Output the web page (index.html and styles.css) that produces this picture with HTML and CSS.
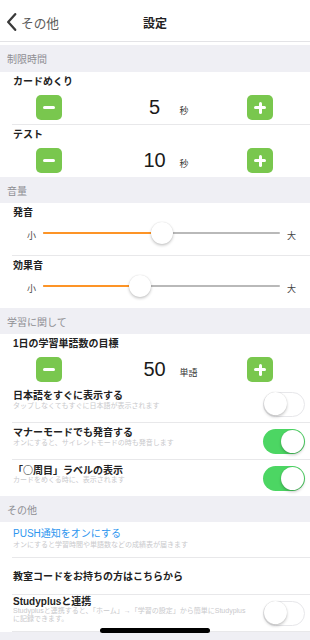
FILE: index.html
```html
<!DOCTYPE html>
<html lang="ja">
<head>
<meta charset="utf-8">
<title>設定</title>
<link rel="stylesheet" href="styles.css">
</head>
<body>
<div class="screen">
  <header class="nav">
    <div class="back">
      <svg class="chev" width="11" height="18" viewBox="0 0 11 18"><path d="M9.2 1.2 L2.2 9 L9.2 16.8" fill="none" stroke="#3a3a3a" stroke-width="2.3" stroke-linecap="round" stroke-linejoin="round"/></svg>
      <span>その他</span>
    </div>
    <div class="title">設定</div>
    <div></div>
  </header>
  <div class="gap"></div>

  <div class="section-header first">制限時間</div>
  <div class="item stepper-item">
    <div class="item-title">カードめくり</div>
    <div class="stepper">
      <div class="step minus"></div>
      <div class="value">5</div>
      <div class="unit">秒</div>
      <div class="step plus"></div>
    </div>
  </div>
  <div class="sep"></div>
  <div class="item stepper-item">
    <div class="item-title">テスト</div>
    <div class="stepper">
      <div class="step minus"></div>
      <div class="value">10</div>
      <div class="unit">秒</div>
      <div class="step plus"></div>
    </div>
  </div>

  <div class="section-header">音量</div>
  <div class="item slider-item">
    <div class="item-title">発音</div>
    <div class="slider">
      <span class="lbl">小</span>
      <div class="track"><div class="fill" style="width:50.2%"></div><div class="thumb" style="left:50.2%"></div></div>
      <span class="lbl">大</span>
    </div>
  </div>
  <div class="sep"></div>
  <div class="item slider-item">
    <div class="item-title">効果音</div>
    <div class="slider">
      <span class="lbl">小</span>
      <div class="track"><div class="fill" style="width:41%"></div><div class="thumb" style="left:41%"></div></div>
      <span class="lbl">大</span>
    </div>
  </div>

  <div class="section-header">学習に関して</div>
  <div class="item stepper-item">
    <div class="item-title">1日の学習単語数の目標</div>
    <div class="stepper">
      <div class="step minus"></div>
      <div class="value">50</div>
      <div class="unit">単語</div>
      <div class="step plus"></div>
    </div>
  </div>
  <div class="item toggle-row">
    <div class="texts">
      <div class="row-title">日本語をすぐに表示する</div>
      <div class="row-sub">タップしなくてもすぐに日本語が表示されます</div>
    </div>
    <div class="toggle off"><div class="knob"></div></div>
  </div>
  <div class="sep"></div>
  <div class="item toggle-row">
    <div class="texts">
      <div class="row-title">マナーモードでも発音する</div>
      <div class="row-sub">オンにすると、サイレントモードの時も発音します</div>
    </div>
    <div class="toggle on"><div class="knob"></div></div>
  </div>
  <div class="sep"></div>
  <div class="item toggle-row">
    <div class="texts">
      <div class="row-title cjk">「○周目」ラベルの表示</div>
      <div class="row-sub">カードをめくる時に、表示されます</div>
    </div>
    <div class="toggle on"><div class="knob"></div></div>
  </div>

  <div class="section-header">その他</div>
  <div class="item push-row">
    <div class="row-title link">PUSH通知をオンにする</div>
    <div class="row-sub">オンにすると学習時間や単語数などの成績表が届きます</div>
  </div>
  <div class="sep"></div>
  <div class="item plain-row">
    <div class="row-title">教室コードをお持ちの方はこちらから</div>
  </div>
  <div class="sep"></div>
  <div class="item toggle-row study-row">
    <div class="texts">
      <div class="row-title">Studyplusと連携</div>
      <div class="row-sub two">Studyplusと連携すると、「ホーム」→「学習の設定」から簡単にStudyplus<br>に記録できます。</div>
    </div>
    <div class="toggle off"><div class="knob"></div></div>
  </div>
  <div class="sep"></div>
  <div class="bottom"></div>
  <div class="home-indicator"></div>
</div>
</body>
</html>
```

FILE: styles.css
```css
* { box-sizing: border-box; }
html, body { margin: 0; padding: 0; background: #ffffff; }
body {
  font-family: "Liberation Sans", "Noto Sans CJK JP", sans-serif;
  color: #1e1e1e;
}
.screen {
  width: 310px;
  height: 640px;
  position: relative;
  overflow: hidden;
  background: #ffffff;
}

/* nav */
.nav {
  height: 42px;
  padding-top: 3px;
  border-bottom: 1px solid #e3e3e6;
  display: grid;
  grid-template-columns: 1fr auto 1fr;
  align-items: center;
}
.back {
  display: flex;
  align-items: center;
  padding-left: 6px;
  color: #5a5a5a;
  font-size: 12.7px;
}
.back span { margin-left: 4px; font-family: "Noto Sans CJK JP", sans-serif; }
.chev { display: block; }
.title {
  font-family: "Noto Sans CJK JP", sans-serif;
  font-size: 12px;
  font-weight: 700;
  color: #222;
}
.gap { height: 3px; }

/* section headers */
.section-header {
  height: 26px;
  background: #efeff4;
  padding-left: 7px;
  display: flex;
  align-items: center;
  font-family: "Noto Sans CJK JP", sans-serif;
  font-size: 10px;
  color: #8e8e93;
}
.section-header.first { height: 27px; }

.sep {
  height: 1px;
  margin-left: 12px;
  background: #e8e8ea;
}

.item-title {
  padding-left: 13px;
  font-size: 10px;
  line-height: 11px;
  font-weight: 700;
  color: #222;
}

/* stepper */
.stepper-item {
  height: 52px;
  padding-top: 4px;
}
.stepper {
  margin-top: 8px;
  height: 25px;
  display: grid;
  grid-template-columns: 26px 1fr 50px 1fr 26px;
  align-items: center;
  padding: 0 37px 0 36px;
}
.step {
  width: 26px;
  height: 25px;
  border-radius: 5px;
  background: #79c74e;
  position: relative;
}
.step::before, .plus::after {
  content: "";
  position: absolute;
  left: 7px;
  top: 11px;
  width: 12px;
  height: 3px;
  border-radius: 1.5px;
  background: #ffffff;
}
.plus::after {
  left: 11.5px;
  top: 6.5px;
  width: 3px;
  height: 12px;
}
.minus { grid-column: 1; }
.plus { grid-column: 5; }
.value {
  grid-column: 3;
  justify-self: center;
  font-size: 20px;
  line-height: 25px;
  color: #1a1a1a;
}
.unit {
  grid-column: 4;
  justify-self: start;
  font-family: "Noto Sans CJK JP", sans-serif;
  font-size: 9px;
  padding-top: 5px;
  color: #333;
}

/* slider */
.slider-item {
  height: 52px;
  padding-top: 4px;
}
.slider {
  margin-top: 4px;
  height: 22px;
  display: grid;
  grid-template-columns: auto 1fr auto;
  column-gap: 7px;
  align-items: center;
  padding: 0 14px 0 27px;
}
.lbl {
  font-family: "Noto Sans CJK JP", sans-serif;
  font-size: 9px;
  color: #444;
  padding-top: 4px;
}
.track {
  position: relative;
  height: 2px;
  background: #b9b9b9;
  border-radius: 1px;
}
.fill {
  position: absolute;
  left: 0;
  top: 0;
  height: 2px;
  background: #fd9426;
  border-radius: 1px;
}
.thumb {
  position: absolute;
  top: -10px;
  width: 22px;
  height: 22px;
  margin-left: -11px;
  border-radius: 50%;
  background: #ffffff;
  box-shadow: 0 1.5px 3px rgba(0,0,0,0.22), 0 0 1px rgba(0,0,0,0.15);
}

/* toggle rows */
.toggle-row {
  height: 36px;
  display: flex;
  justify-content: space-between;
  align-items: center;
  padding: 0 5px 0 13px;
}
.texts {
  align-self: flex-start;
  padding-top: 4px;
}
.row-title {
  font-size: 10px;
  line-height: 11px;
  font-weight: 700;
  color: #222;
}
.row-title.cjk { font-family: "Noto Sans CJK JP", sans-serif; }
.row-sub {
  font-size: 7px;
  line-height: 10px;
  color: #c9c9cc;
  white-space: nowrap;
}
.row-sub.two { line-height: 8.5px; }
.link { color: #2d96ef; font-weight: 400; }

.toggle {
  width: 42px;
  height: 25px;
  border-radius: 13px;
  position: relative;
  flex: none;
}
.toggle.off {
  background: #ffffff;
  border: 1.5px solid #e7e7ea;
}
.toggle.on { background: #4cd663; }
.knob {
  position: absolute;
  width: 23px;
  height: 23px;
  top: 1px;
  border-radius: 50%;
  background: #ffffff;
  box-shadow: 0 2px 3px rgba(0,0,0,0.2), 0 0 1px rgba(0,0,0,0.2);
}
.toggle.off .knob { top: -0.5px; left: -0.5px; }
.toggle.on .knob { right: 1px; }

.push-row {
  height: 35px;
  padding: 5.5px 0 0 13px;
}
.push-row .row-sub { margin-top: 1px; }
.plain-row {
  height: 36px;
  padding-left: 13px;
  display: flex;
  align-items: center;
}
.study-row .texts { padding-top: 0.5px; }

.bottom {
  height: 8px;
  background: #efeff4;
}
.home-indicator {
  position: absolute;
  left: 100px;
  top: 628px;
  width: 110px;
  height: 5px;
  border-radius: 3px;
  background: #000000;
}
```
